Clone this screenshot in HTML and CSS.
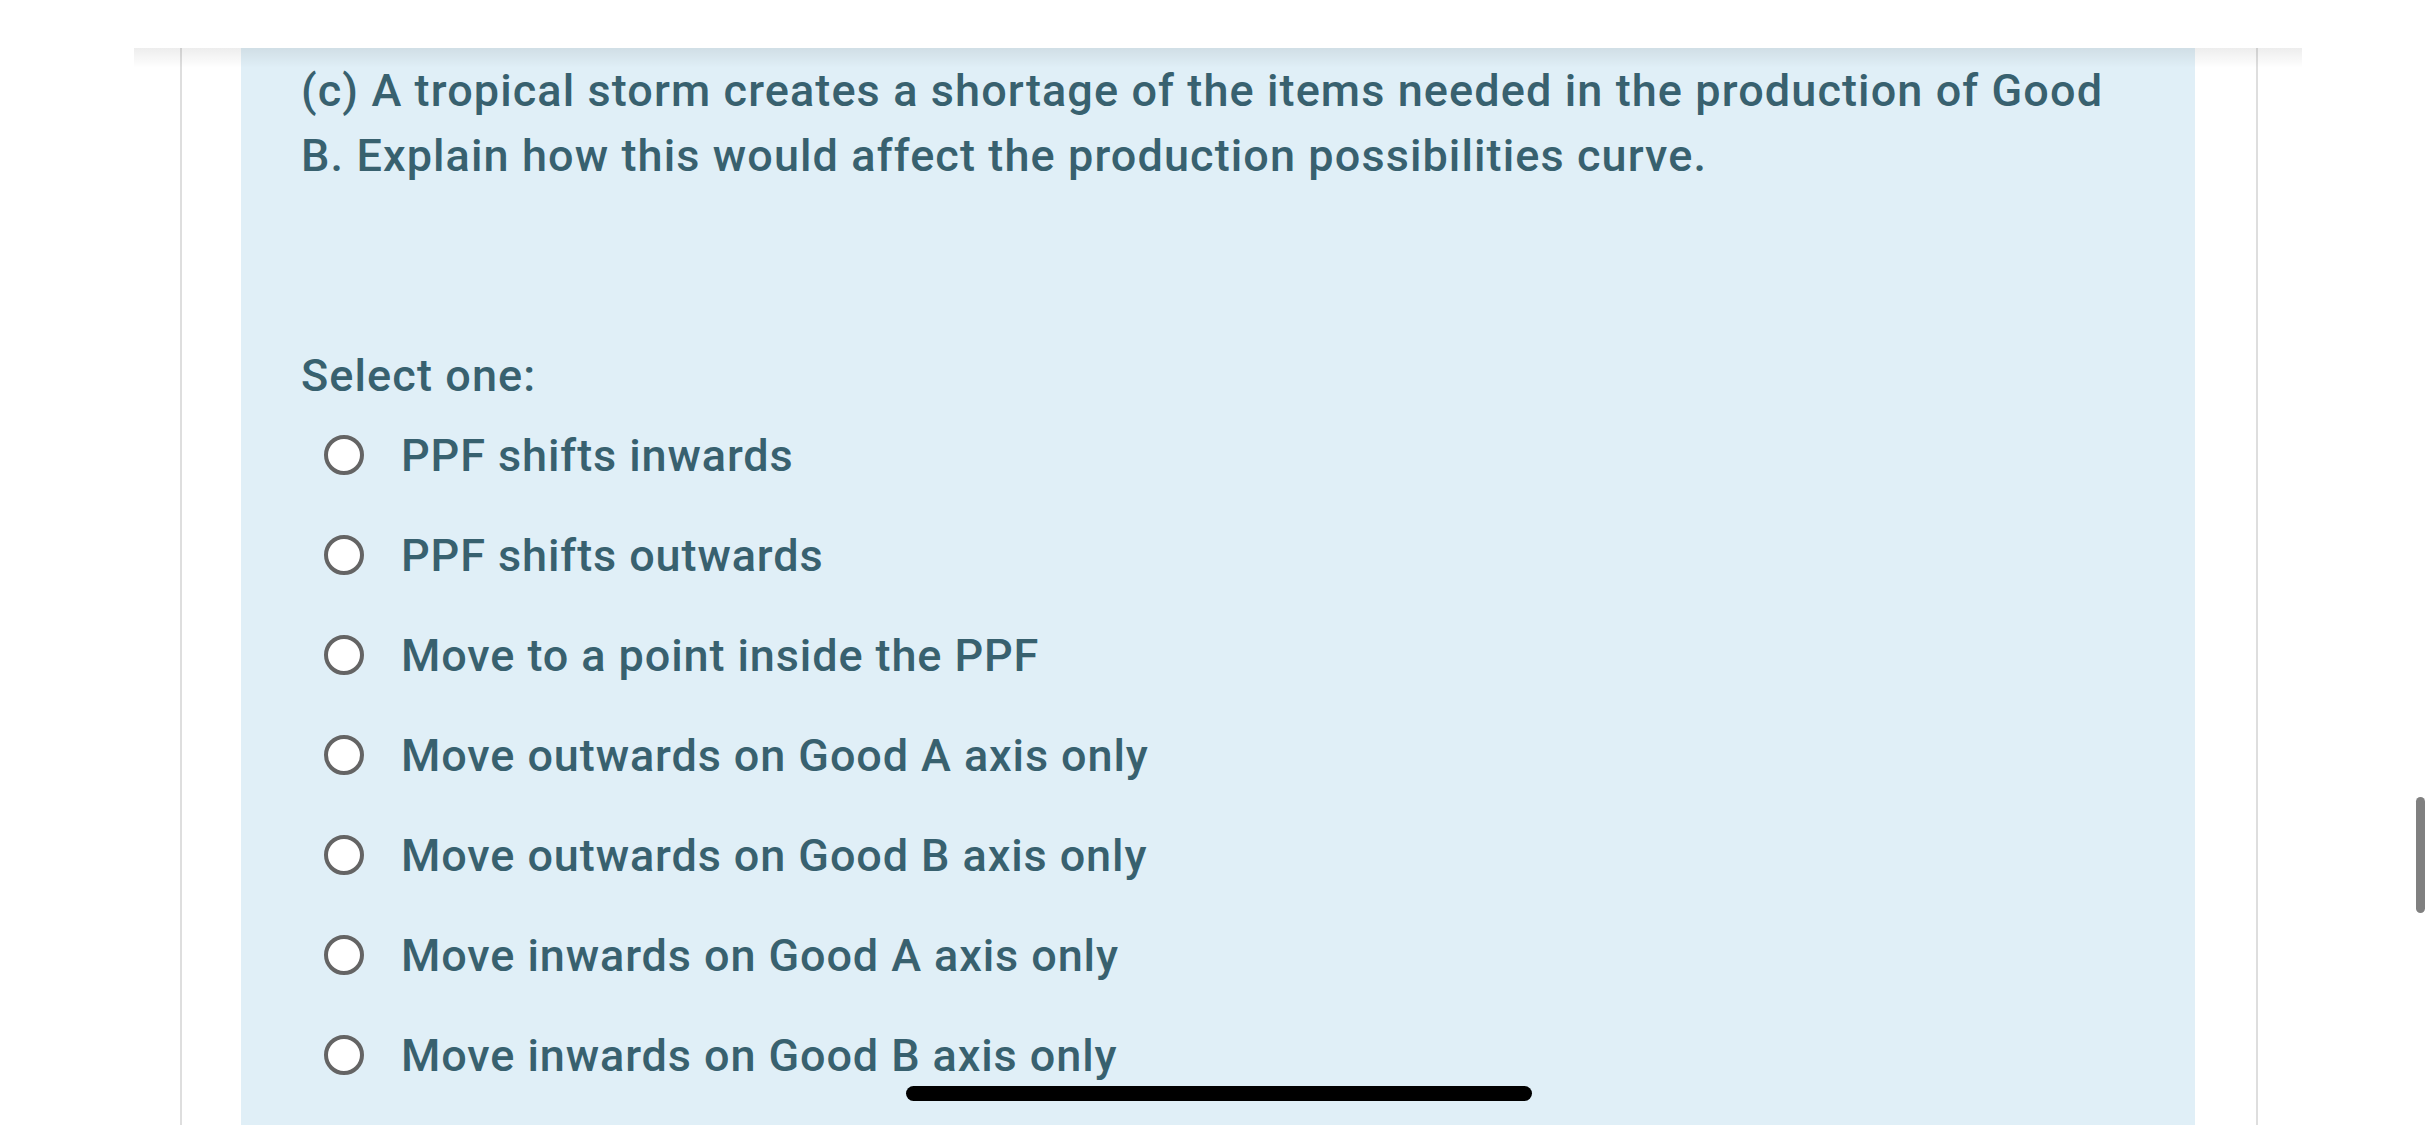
FILE: index.html
```html
<!DOCTYPE html>
<html>
<head>
<meta charset="utf-8">
<link rel="stylesheet" href="styles.css">
</head>
<body>
<div class="page">
  <div class="topshade"></div>
  <div class="frame">
    <div class="panel">
      <p class="question">(c) A tropical storm creates a shortage of the items needed in the production of Good B. Explain how this would affect the production possibilities curve.</p>
      <div class="prompt">Select one:</div>
      <div class="options">
        <label class="option"><span class="radio"></span><span class="label">PPF shifts inwards</span></label>
        <label class="option"><span class="radio"></span><span class="label">PPF shifts outwards</span></label>
        <label class="option"><span class="radio"></span><span class="label">Move to a point inside the PPF</span></label>
        <label class="option"><span class="radio"></span><span class="label">Move outwards on Good A axis only</span></label>
        <label class="option"><span class="radio"></span><span class="label">Move outwards on Good B axis only</span></label>
        <label class="option"><span class="radio"></span><span class="label">Move inwards on Good A axis only</span></label>
        <label class="option"><span class="radio"></span><span class="label">Move inwards on Good B axis only</span></label>
      </div>
    </div>
  </div>
  <div class="scrollbar"></div>
  <div class="home-indicator"></div>
</div>
</body>
</html>
```
FILE: styles.css
```css
html, body {
  margin: 0;
  padding: 0;
  background: #ffffff;
}
.page {
  position: relative;
  width: 2436px;
  height: 1125px;
  overflow: hidden;
  padding-top: 48px;
  box-sizing: border-box;
  font-family: Roboto, "Liberation Sans", sans-serif;
  color: #38616f;
}
.topshade {
  position: absolute;
  left: 134px;
  top: 48px;
  width: 2168px;
  height: 20px;
  background: linear-gradient(to bottom, rgba(0,0,0,0.07), rgba(0,0,0,0));
  z-index: 2;
}
.frame {
  margin-left: 180px;
  width: 2078px;
  height: 1077px;
  box-sizing: border-box;
  border-left: 2px solid #dedede;
  border-right: 2px solid #dedede;
  display: flex;
}
.panel {
  flex: 1;
  margin: 0 61px 0 59px;
  background: #e0eff7;
  padding: 10px 60px 0 60px;
}
.question {
  margin: 0;
  font-size: 45px;
  line-height: 65px;
  font-weight: 500;
  letter-spacing: 1.1px;
}
.prompt {
  margin-top: 159px;
  font-size: 45px;
  line-height: 58px;
  font-weight: 500;
  letter-spacing: 1.1px;
}
.options {
  display: flex;
  flex-direction: column;
}
.option {
  display: flex;
  align-items: center;
  height: 100px;
  padding-left: 23px;
}
.radio {
  width: 40px;
  height: 40px;
  box-sizing: border-box;
  border: 4px solid #646464;
  border-radius: 50%;
  background: #ffffff;
  flex: none;
}
.label {
  margin-left: 37px;
  font-size: 45px;
  font-weight: 500;
  letter-spacing: 0.9px;
}
.scrollbar {
  position: absolute;
  right: 11px;
  top: 797px;
  width: 9px;
  height: 116px;
  border-radius: 5px;
  background: #808080;
}
.home-indicator {
  position: absolute;
  left: 906px;
  top: 1086px;
  width: 626px;
  height: 15px;
  border-radius: 8px;
  background: #000000;
}
```
